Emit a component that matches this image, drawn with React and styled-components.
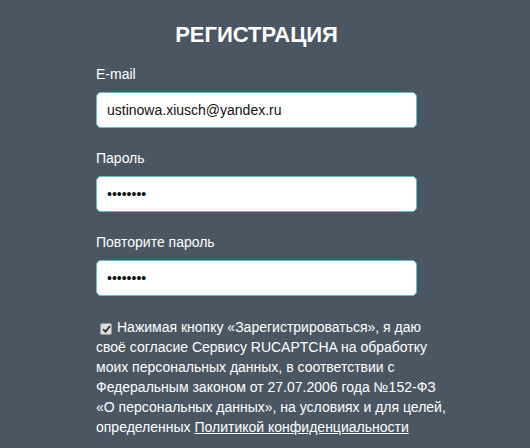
import React from "react";
import styled, { createGlobalStyle } from "styled-components";

const Global = createGlobalStyle`
  html, body { margin: 0; padding: 0; background: #4a5762; }
  body { font-family: "Liberation Sans", Arial, sans-serif; color: #fff; }
  * { box-sizing: border-box; }
`;

const Page = styled.div`
  min-height: 448px;
  background: #4a5762;
  padding: 22px 0 0 96px;
`;

const Form = styled.form`
  width: 351px;
  display: flex;
  flex-direction: column;
`;

const Title = styled.h1`
  width: 321px;
  margin: 0 0 19px;
  font-size: 22px;
  line-height: 25px;
  font-weight: bold;
  text-align: center;
  color: #fff;
`;

const Label = styled.label`
  display: block;
  font-size: 14px;
  line-height: 16px;
  color: #fff;
  margin-bottom: 10px;
`;

const Field = styled.div`
  display: flex;
  flex-direction: column;
  margin-bottom: ${(p) => p.$gap}px;
`;

const Input = styled.input`
  width: 321px;
  height: 36px;
  border: 1px solid #5fc3c6;
  border-radius: 5px;
  background: #fff;
  padding: 0 10px;
  font-family: "Liberation Sans", Arial, sans-serif;
  font-size: 14px;
  color: #111;
  outline: none;
`;

const Consent = styled.p`
  margin: 0;
  font-size: 14px;
  line-height: 20px;
  color: #fff;
`;

const Box = styled.span`
  display: inline-flex;
  align-items: center;
  justify-content: center;
  width: 12px;
  height: 12px;
  margin: 0 5px 0 4px;
  vertical-align: -1px;
  background: #dedede;
  border: 1px solid #9a9a9a;
  border-radius: 2px;
`;

const Link = styled.a`
  color: #fff;
  text-decoration: underline;
`;

export default function App() {
  return (
    <Page>
      <Global />
      <Form onSubmit={(e) => e.preventDefault()}>
        <Title>РЕГИСТРАЦИЯ</Title>
        <Field $gap={22}>
          <Label>E-mail</Label>
          <Input type="text" defaultValue="ustinowa.xiusch@yandex.ru" />
        </Field>
        <Field $gap={22}>
          <Label>Пароль</Label>
          <Input type="password" defaultValue="12345678" />
        </Field>
        <Field $gap={21}>
          <Label>Повторите пароль</Label>
          <Input type="password" defaultValue="12345678" />
        </Field>
        <Consent>
          <Box>
            <svg width="9" height="8" viewBox="0 0 9 8">
              <path d="M1 4.2 L3.4 6.6 L8 1.2" fill="none" stroke="#333" strokeWidth="1.8" />
            </svg>
          </Box>
          Нажимая кнопку «Зарегистрироваться», я даю своё согласие Сервису RUCAPTCHA на обработку моих персональных данных, в соответствии с Федеральным законом от 27.07.2006 года №152-ФЗ «О персональных данных», на условиях и для целей, определенных{" "}
          <Link href="#">Политикой конфиденциальности</Link>
        </Consent>
      </Form>
    </Page>
  );
}
